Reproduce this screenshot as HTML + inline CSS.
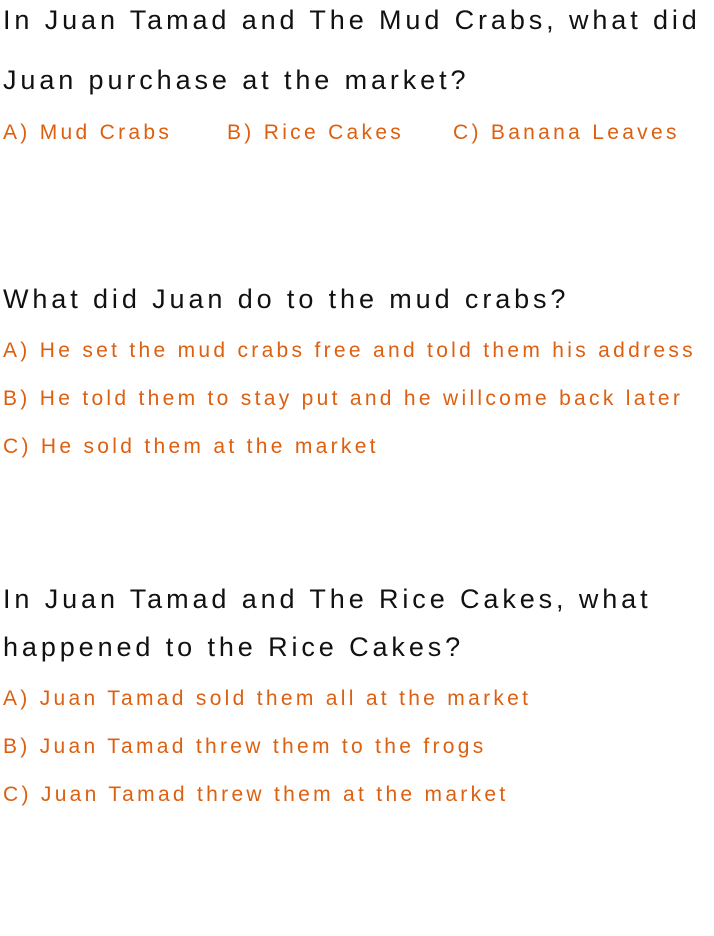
<!DOCTYPE html>
<html><head><style>
body{margin:0;width:714px;height:936px;background:#fff;position:relative;font-family:"Liberation Sans",sans-serif;overflow:hidden}
div{position:absolute;left:3px;white-space:nowrap;line-height:1}
.q{font-size:27px;color:#111;letter-spacing:3.9px}
.a{font-size:21px;color:#dd5f10;letter-spacing:3.3px}
</style></head><body>
<div class="q" style="top:7px">In Juan Tamad and The Mud Crabs, what did</div>
<div class="q" style="top:67px">Juan purchase at the market?</div>
<div class="a" style="top:122px">A) Mud Crabs</div>
<div class="a" style="top:122px;left:227px">B) Rice Cakes</div>
<div class="a" style="top:122px;left:453px">C) Banana Leaves</div>
<div class="q" style="top:286px">What did Juan do to the mud crabs?</div>
<div class="a" style="top:340px">A) He set the mud crabs free and told them his address</div>
<div class="a" style="top:388px">B) He told them to stay put and he willcome back later</div>
<div class="a" style="top:436px">C) He sold them at the market</div>
<div class="q" style="top:586px">In Juan Tamad and The Rice Cakes, what</div>
<div class="q" style="top:634px">happened to the Rice Cakes?</div>
<div class="a" style="top:688px">A) Juan Tamad sold them all at the market</div>
<div class="a" style="top:736px">B) Juan Tamad threw them to the frogs</div>
<div class="a" style="top:784px">C) Juan Tamad threw them at the market</div>
</body></html>
